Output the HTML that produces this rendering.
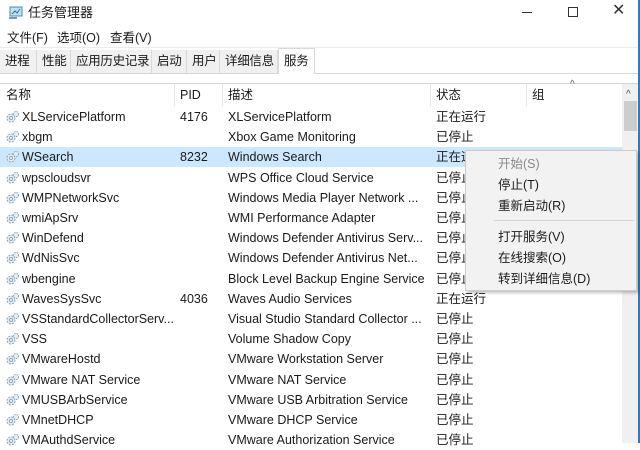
<!DOCTYPE html><html><head><meta charset="utf-8"><style>
*{margin:0;padding:0;box-sizing:border-box}
body{width:640px;height:443px;overflow:hidden;background:#fff;font-family:"Liberation Sans","Noto Sans CJK SC",sans-serif;font-size:12.5px;color:#1a1a1a;position:relative;line-height:16px}
.a{position:absolute;white-space:nowrap;line-height:16px}
.tab{position:absolute;top:50px;height:23px;background:#f0f0f0;border-right:1px solid #d9d9d9;line-height:23px;padding-left:5px;font-size:12.5px;white-space:nowrap;overflow:hidden;letter-spacing:-0.3px}
.row{position:absolute;left:0;width:622px;height:20px;line-height:20px;white-space:nowrap}
.row span{position:absolute}
.ic{position:absolute;left:5px;top:3px;width:15px;height:14px}
.menu div{height:21px;line-height:21px;padding-left:32px;white-space:nowrap}
</style></head><body>
<svg class="a" style="left:8px;top:5px" width="16" height="16"><rect x="2" y="2" width="12" height="9" fill="#bfe3f5" stroke="#4a8db5"/><path d="M4 9l3-3 2 2 3-4" stroke="#2a6a9a" fill="none"/><rect x="1" y="12" width="8" height="2" fill="#7a9bb0"/></svg>
<div class="a" style="left:28px;top:5px;font-size:13px">任务管理器</div>
<div class="a" style="left:522px;top:12px;width:10px;height:1px;background:#333"></div>
<div class="a" style="left:568px;top:7px;width:10px;height:10px;border:1px solid #333"></div>
<div class="a" style="left:612px;top:3px;font-size:16px;color:#333">✕</div>
<div class="a" style="left:638px;top:0;width:2px;height:443px;background:#2b7bbf"></div>
<div class="a" style="left:7px;top:30px">文件(F)</div>
<div class="a" style="left:57px;top:30px">选项(O)</div>
<div class="a" style="left:110px;top:30px">查看(V)</div>
<div class="a" style="left:0;top:47px;width:638px;height:1px;background:#ececec"></div>
<div class="tab" style="left:0;width:37px">进程</div>
<div class="tab" style="left:37px;width:34px">性能</div>
<div class="tab" style="left:71px;width:81px">应用历史记录</div>
<div class="tab" style="left:152px;width:35px">启动</div>
<div class="tab" style="left:187px;width:33px">用户</div>
<div class="tab" style="left:220px;width:58px">详细信息</div>
<div class="tab" style="left:278px;width:37px;top:48px;height:26px;background:#fff;border:1px solid #d9d9d9;border-bottom:none;line-height:24px">服务</div>
<div class="a" style="left:0;top:73px;width:278px;height:1px;background:#d9d9d9"></div>
<div class="a" style="left:315px;top:73px;width:323px;height:1px;background:#d9d9d9"></div>
<div class="a" style="left:0;top:83px;width:638px;height:1px;background:#d6d6d6"></div>
<div class="a" style="left:174px;top:84px;width:1px;height:22px;background:#e5e5e5"></div>
<div class="a" style="left:222px;top:84px;width:1px;height:22px;background:#e5e5e5"></div>
<div class="a" style="left:430px;top:84px;width:1px;height:22px;background:#e5e5e5"></div>
<div class="a" style="left:526px;top:84px;width:1px;height:22px;background:#e5e5e5"></div>
<div class="a" style="left:6px;top:87px">名称</div>
<div class="a" style="left:180px;top:87px">PID</div>
<div class="a" style="left:228px;top:87px">描述</div>
<div class="a" style="left:436px;top:87px">状态</div>
<div class="a" style="left:532px;top:87px">组</div>
<div class="a" style="left:570px;top:77px;font-size:10px;color:#666">^</div>
<div class="a" style="left:622px;top:84px;width:16px;height:359px;background:#f0f0f0"></div>
<div class="a" style="left:626px;top:87px;font-size:10px;color:#555">^</div>
<div class="a" style="left:624px;top:101px;width:13px;height:30px;background:#cdcdcd"></div>
<div id="rows"></div>
<div class="a menu" style="left:465px;top:150px;width:172px;height:141px;background:#f2f2f2;border:1px solid #ccc;box-shadow:2px 2px 3px rgba(0,0,0,.25);padding-top:3px">
<div style="color:#8a8a8a">开始(S)</div><div>停止(T)</div><div>重新启动(R)</div>
<div style="height:7px;padding:0;margin:3px 2px 0 28px;border-top:1px solid #d6d6d6"></div>
<div>打开服务(V)</div><div>在线搜索(O)</div><div>转到详细信息(D)</div></div>
<script>
var d=[["XLServicePlatform","4176","XLServicePlatform","正在运行"],["xbgm","","Xbox Game Monitoring","已停止"],["WSearch","8232","Windows Search","正在运行"],["wpscloudsvr","","WPS Office Cloud Service","已停止"],["WMPNetworkSvc","","Windows Media Player Network ...","已停止"],["wmiApSrv","","WMI Performance Adapter","已停止"],["WinDefend","","Windows Defender Antivirus Serv...","已停止"],["WdNisSvc","","Windows Defender Antivirus Net...","已停止"],["wbengine","","Block Level Backup Engine Service","已停止"],["WavesSysSvc","4036","Waves Audio Services","正在运行"],["VSStandardCollectorServ...","","Visual Studio Standard Collector ...","已停止"],["VSS","","Volume Shadow Copy","已停止"],["VMwareHostd","","VMware Workstation Server","已停止"],["VMware NAT Service","","VMware NAT Service","已停止"],["VMUSBArbService","","VMware USB Arbitration Service","已停止"],["VMnetDHCP","","VMware DHCP Service","已停止"],["VMAuthdService","","VMware Authorization Service","已停止"]];
var h="";d.forEach(function(r,i){var t=107+i*20.2;h+='<div class="row" style="top:'+t+'px;'+(i==2?'background:#cce8ff':'')+'"><svg class="ic" viewBox="0 0 15 14"><circle cx="6" cy="8" r="4" fill="#e4edf3" stroke="#8aa4b8" stroke-dasharray="2 1.2"/><circle cx="6" cy="8" r="1.5" fill="#fff" stroke="#8aa4b8"/><circle cx="11" cy="4" r="2.6" fill="#e4edf3" stroke="#8aa4b8" stroke-dasharray="1.5 1"/></svg><span style="left:22px">'+r[0]+'</span><span style="left:180px">'+r[1]+'</span><span style="left:228px">'+r[2]+'</span><span style="left:436px">'+r[3]+'</span></div>'});
document.getElementById("rows").outerHTML=h;
</script>
</body></html>
